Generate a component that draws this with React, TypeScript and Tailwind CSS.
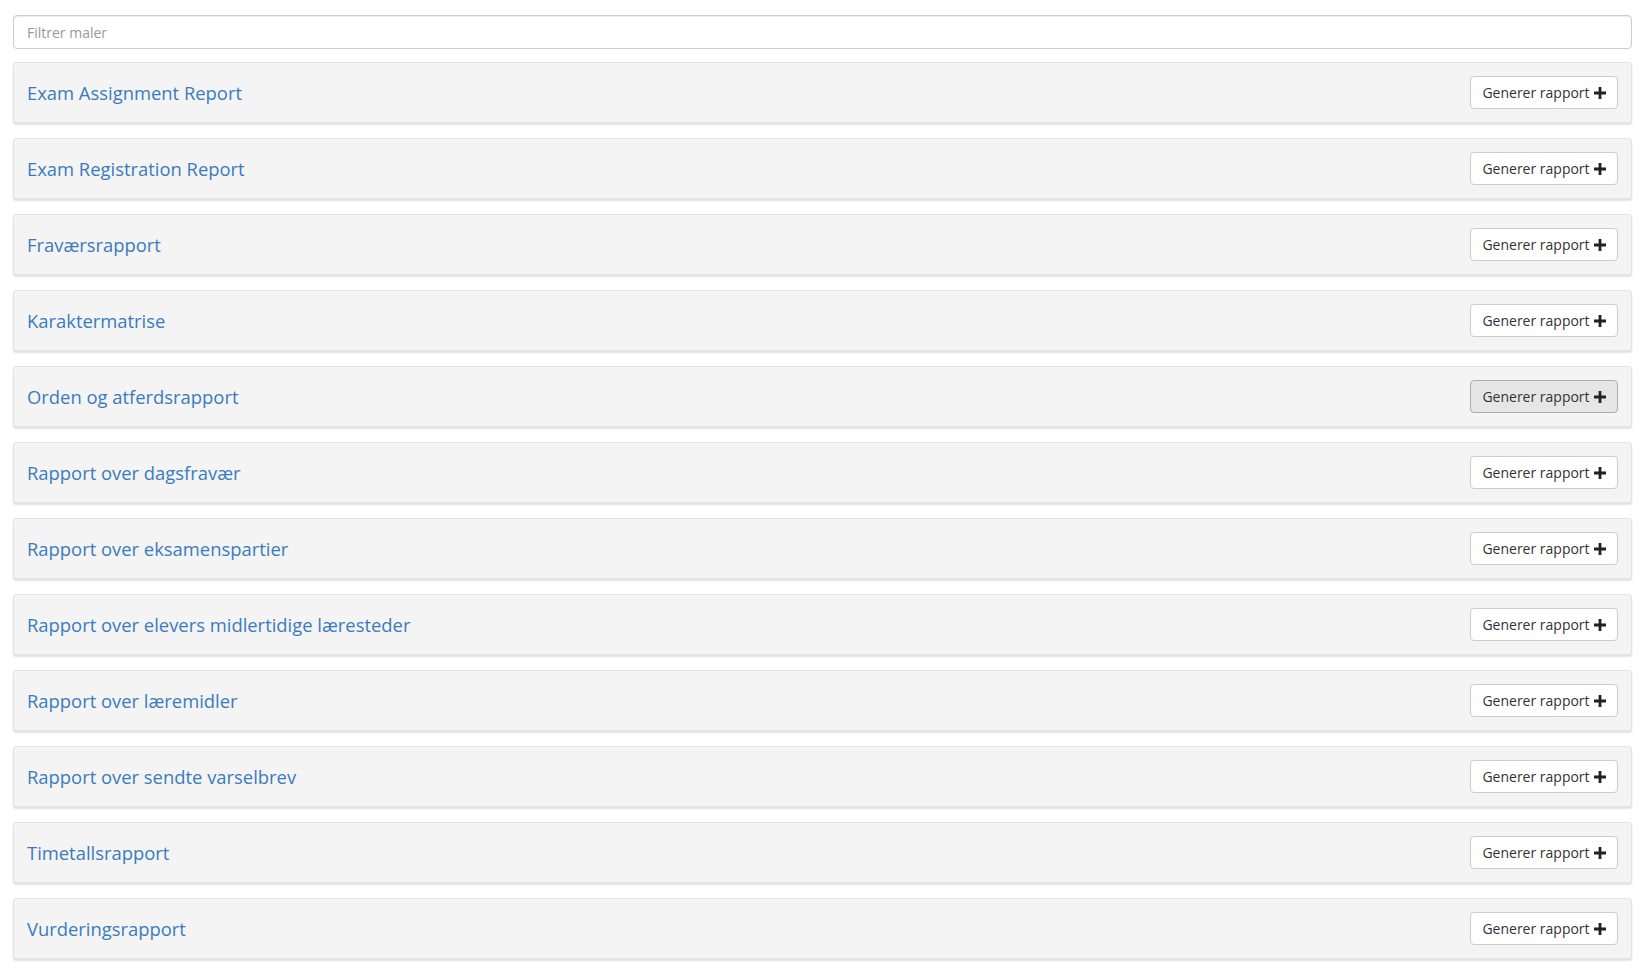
const templates = [
  "Exam Assignment Report",
  "Exam Registration Report",
  "Fraværsrapport",
  "Karaktermatrise",
  "Orden og atferdsrapport",
  "Rapport over dagsfravær",
  "Rapport over eksamenspartier",
  "Rapport over elevers midlertidige læresteder",
  "Rapport over læremidler",
  "Rapport over sendte varselbrev",
  "Timetallsrapport",
  "Vurderingsrapport",
];

function PlusIcon() {
  return (
    <svg viewBox="0 0 12 12" className="w-[12px] h-[12px]" aria-hidden="true">
      <path d="M4.6 0h2.8v4.6H12v2.8H7.4V12H4.6V7.4H0V4.6h4.6z" fill="#222" />
    </svg>
  );
}

export default function App() {
  return (
    <div
      className="min-h-screen bg-white pl-[13px] pr-[15px] pt-[15px] pb-4 text-[#333]"
      style={{ fontFamily: '"Open Sans", "Noto Sans", Arial, sans-serif' }}
    >
      {/* Filter */}
      <input
        type="text"
        placeholder="Filtrer maler"
        className="block w-full h-[34px] px-[13px] text-[14px] bg-white border border-[#ccc] rounded-[4px] outline-none placeholder:text-[#999] shadow-[inset_0_1px_1px_rgba(0,0,0,0.075)]"
      />

      <div className="mt-[13px] flex flex-col gap-[15px]">
        {templates.map((name, i) => (
          <div
            key={name}
            className="h-[61px] flex items-center justify-between pl-[13px] pr-[13px] bg-[#f4f4f4] border border-[#e3e3e3] rounded-[3px] shadow-[0_2px_2px_rgba(0,0,0,0.12)]"
          >
            <span className="mt-[2px] text-[18.4px] text-[#3a7bbf] leading-none">{name}</span>
            <button
              className={
                i === 4
                  ? "h-[33px] w-[148px] flex items-center justify-center gap-[4px] text-[14px] text-[#333] bg-[#e6e6e6] border border-[#adadad] rounded-[4px]"
                  : "h-[33px] w-[148px] flex items-center justify-center gap-[4px] text-[14px] text-[#333] bg-white border border-[#ccc] rounded-[4px]"
              }
            >
              Generer rapport
              <PlusIcon />
            </button>
          </div>
        ))}
      </div>
    </div>
  );
}
